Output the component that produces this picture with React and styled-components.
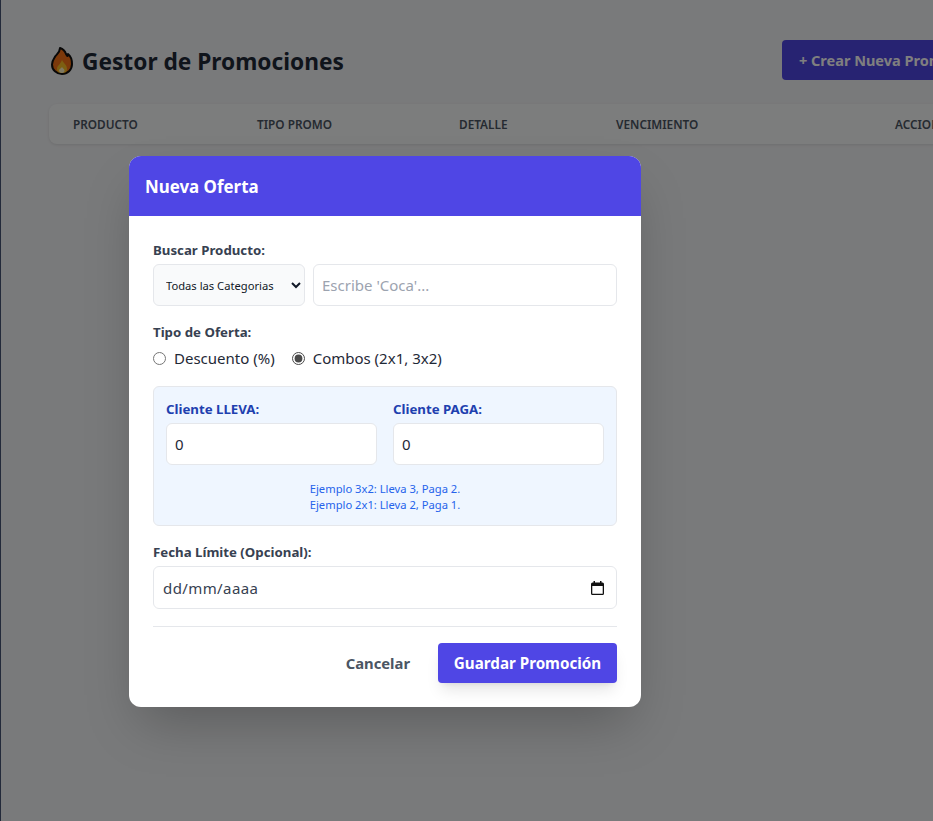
import React from 'react';
import styled, { createGlobalStyle } from 'styled-components';

const Global = createGlobalStyle`
  html, body {
    margin: 0;
    height: 100%;
    overflow: hidden;
    background: #f3f4f6;
  }
  body, input, select, button {
    font-family: "Noto Sans", "Open Sans", sans-serif;
  }
  * { box-sizing: border-box; }
`;

const Page = styled.div`
  position: relative;
  width: 933px;
  height: 821px;
  overflow: hidden;
  border-left: 1px solid #232a3a;
  background: #f3f4f6;
`;

const Content = styled.main`
  width: 1100px;
  padding: 40px 48px;
`;

const TopBar = styled.div`
  display: flex;
  align-items: center;
  height: 40px;
  margin-bottom: 24px;
`;

const PageTitle = styled.h1`
  display: flex;
  align-items: center;
  gap: 9px;
  width: 733px;
  margin: 0;
  padding: 2px 0 0 2px;
  font-size: 22.7px;
  font-weight: 700;
  color: #1f2937;
`;

const CreateButton = styled.button`
  height: 40px;
  padding: 0 17px;
  border: 0;
  border-radius: 4px;
  background: #4f46e5;
  color: #fff;
  font-size: 14.5px;
  font-weight: 700;
  white-space: nowrap;
`;

const TableHead = styled.div`
  display: grid;
  grid-template-columns: 184px 202px 157px 279px 1fr;
  align-items: center;
  height: 40px;
  padding: 0 24px;
  border-radius: 8px;
  background: #f9fafb;
  box-shadow: 0 1px 3px rgba(0, 0, 0, 0.1);
`;

const HeadCell = styled.span`
  font-size: 11.8px;
  font-weight: 600;
  color: #4b5563;
  text-transform: uppercase;
`;

const Overlay = styled.div`
  position: absolute;
  inset: 0;
  padding: 156px 0 0 128px;
  background: rgba(0, 0, 0, 0.5);
`;

const Modal = styled.div`
  width: 512px;
  border-radius: 12px;
  overflow: hidden;
  background: #fff;
  box-shadow: 0 25px 50px -12px rgba(0, 0, 0, 0.25);
`;

const ModalHeader = styled.div`
  display: flex;
  align-items: center;
  height: 60px;
  padding: 0 16px;
  background: #4f46e5;
  color: #fff;
  font-size: 16.9px;
  font-weight: 700;
`;

const ModalBody = styled.div`
  padding: 24px;
`;

const Label = styled.label`
  display: block;
  margin-bottom: 4px;
  font-size: 13.25px;
  line-height: 20px;
  font-weight: 700;
  color: ${(p) => p.$color || '#374151'};
`;

const SearchRow = styled.div`
  display: flex;
  gap: 8px;
  margin-bottom: 16px;
`;

const Select = styled.select`
  width: 152px;
  height: 42px;
  padding: 0 8px;
  border: 1px solid #e5e7eb;
  border-radius: 6px;
  background: #f9fafb;
  color: #111827;
  font-size: 11.2px;
`;

const Input = styled.input`
  flex: 1;
  width: 100%;
  min-width: 0;
  height: 42px;
  padding: 0 8px;
  border: 1px solid #e5e7eb;
  border-radius: 6px;
  background: #fff;
  color: #1f2937;
  font-size: 15px;
  &::placeholder {
    color: #9ca3af;
  }
`;

const RadioRow = styled.div`
  display: flex;
  align-items: center;
  gap: 17px;
  height: 24px;
  margin-bottom: 16px;
`;

const RadioLabel = styled.label`
  display: flex;
  align-items: center;
  gap: 8px;
  font-size: 15px;
  color: #1f2937;
`;

const Radio = styled.input`
  width: 13px;
  height: 13px;
  margin: 0;
  accent-color: #4a4a4a;
`;

const ComboBox = styled.div`
  margin-bottom: 16px;
  padding: 12px;
  border: 1px solid #e5e7eb;
  border-radius: 6px;
  background: #eff6ff;
`;

const ComboGrid = styled.div`
  display: grid;
  grid-template-columns: 1fr 1fr;
  gap: 16px;
`;

const Hint = styled.p`
  margin: 16px 0 0;
  font-size: 11.2px;
  line-height: 16px;
  text-align: center;
  color: #2563eb;
`;

const DateField = styled.div`
  display: flex;
  align-items: center;
  justify-content: space-between;
  height: 43px;
  padding: 0 12px 0 9px;
  border: 1px solid #e5e7eb;
  border-radius: 6px;
  background: #fff;
`;

const DateText = styled.input`
  flex: 1;
  min-width: 0;
  padding: 0;
  border: 0;
  outline: 0;
  color: #374151;
  font-size: 15px;
  letter-spacing: 0.4px;
`;

const Footer = styled.div`
  display: flex;
  align-items: center;
  justify-content: flex-end;
  gap: 28px;
  margin-top: 17px;
  padding-top: 16px;
  border-top: 1px solid #e5e7eb;
`;

const CancelButton = styled.button`
  padding: 0;
  border: 0;
  background: none;
  color: #4b5563;
  font-size: 14.8px;
  font-weight: 700;
`;

const SaveButton = styled.button`
  width: 179px;
  height: 40px;
  border: 0;
  border-radius: 4px;
  background: #4f46e5;
  color: #fff;
  font-size: 15.2px;
  font-weight: 700;
  box-shadow: 0 10px 15px -3px rgba(0, 0, 0, 0.1), 0 4px 6px -4px rgba(0, 0, 0, 0.1);
`;

const Flame = () => (
  <svg width="22" height="28" viewBox="0 0 22 28">
    <path
      d="M9 1c3 1 5 3 6 6 .5 1 1 2 1.500 2 .5-.5.5-1.500.5-2 2.500 2 4 6 4 10 0 6-4.500 10-10 10S1 23 1 17.500c0-4 2-6 3.500-8.500C6 7 9 5 9 1z"
      fill="#f97316"
      stroke="#111"
      strokeWidth="2"
      strokeLinejoin="round"
    />
    <path d="M11 13c1 3 5 4.500 5 9 0 3-2 4-5 4s-5-1-5-4c0-3.500 3.500-4.500 5-9z" fill="#fbbf24" />
    <path d="M11 20c.8 1.500 2.500 2 2.500 3.500S12.500 26 11 26s-3-1-3-2.500 2-2 3-3.500z" fill="#fef3c7" />
  </svg>
);

const CalendarIcon = () => (
  <svg width="13" height="14" viewBox="0 0 13 14">
    <path d="M2.500 0h1.500v1.500h5V0h1.500v1.500h1A1.500 1.500 0 0 1 13 3v9.500a1.500 1.500 0 0 1-1.500 1.500h-10A1.500 1.500 0 0 1 0 12.500V3a1.500 1.500 0 0 1 1.500-1.500h1z M1.300 5v7.700h10.400V5z" fill="#111" fillRule="evenodd" />
  </svg>
);

const columns = ['Producto', 'Tipo Promo', 'Detalle', 'Vencimiento', 'Acciones'];

export default function App() {
  return (
    <>
      <Global />
      <Page>
        <Content>
          <TopBar>
            <PageTitle><Flame /> Gestor de Promociones</PageTitle>
            <CreateButton>+ Crear Nueva Promoción</CreateButton>
          </TopBar>
          <TableHead>
            {columns.map((c) => <HeadCell key={c}>{c}</HeadCell>)}
          </TableHead>
        </Content>
        <Overlay>
          <Modal>
            <ModalHeader>Nueva Oferta</ModalHeader>
            <ModalBody>
              <Label>Buscar Producto:</Label>
              <SearchRow>
                <Select defaultValue="all">
                  <option value="all">Todas las Categorias</option>
                </Select>
                <Input placeholder="Escribe 'Coca'..." />
              </SearchRow>

              <Label>Tipo de Oferta:</Label>
              <RadioRow>
                <RadioLabel><Radio type="radio" name="tipo" /> Descuento (%)</RadioLabel>
                <RadioLabel><Radio type="radio" name="tipo" defaultChecked /> Combos (2x1, 3x2)</RadioLabel>
              </RadioRow>

              <ComboBox>
                <ComboGrid>
                  <div>
                    <Label $color="#1e40af">Cliente LLEVA:</Label>
                    <Input defaultValue="0" />
                  </div>
                  <div>
                    <Label $color="#1e40af">Cliente PAGA:</Label>
                    <Input defaultValue="0" />
                  </div>
                </ComboGrid>
                <Hint>Ejemplo 3x2: Lleva 3, Paga 2.<br />Ejemplo 2x1: Lleva 2, Paga 1.</Hint>
              </ComboBox>

              <Label>Fecha Límite (Opcional):</Label>
              <DateField>
                <DateText defaultValue="dd/mm/aaaa" />
                <CalendarIcon />
              </DateField>

              <Footer>
                <CancelButton>Cancelar</CancelButton>
                <SaveButton>Guardar Promoción</SaveButton>
              </Footer>
            </ModalBody>
          </Modal>
        </Overlay>
      </Page>
    </>
  );
}
